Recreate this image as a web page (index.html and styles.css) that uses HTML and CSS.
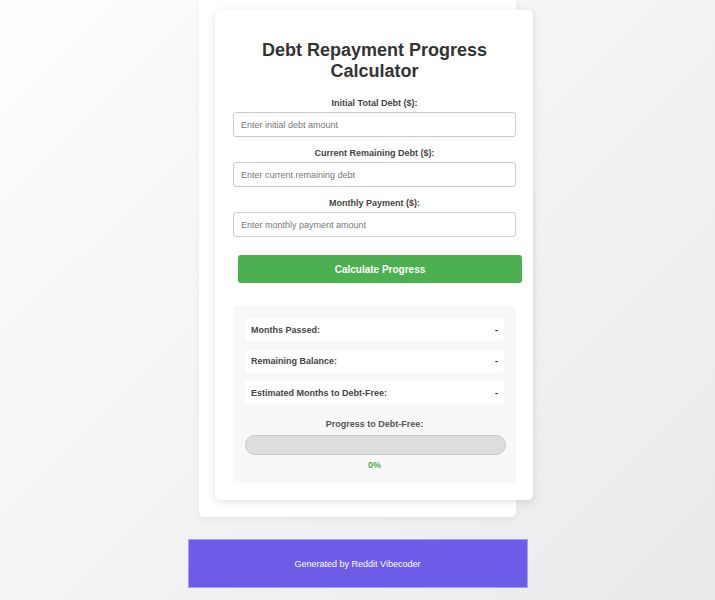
FILE: index.html
```html
<!DOCTYPE html>
<html lang="en">
<head>
<meta charset="utf-8">
<title>Debt Repayment Progress Calculator</title>
<link rel="stylesheet" href="styles.css">
</head>
<body>
<div class="page">
  <div class="shell">
    <div class="card">
      <h1 class="title">Debt Repayment Progress Calculator</h1>
      <div class="field">
        <label class="field-label" for="initial">Initial Total Debt ($):</label>
        <input class="field-input" id="initial" type="number" placeholder="Enter initial debt amount">
      </div>
      <div class="field">
        <label class="field-label" for="remaining">Current Remaining Debt ($):</label>
        <input class="field-input" id="remaining" type="number" placeholder="Enter current remaining debt">
      </div>
      <div class="field">
        <label class="field-label" for="monthly">Monthly Payment ($):</label>
        <input class="field-input" id="monthly" type="number" placeholder="Enter monthly payment amount">
      </div>
      <button class="calc-btn" type="button">Calculate Progress</button>
      <div class="results">
        <div class="result-row"><span class="result-label">Months Passed:</span><span class="result-value">-</span></div>
        <div class="result-row"><span class="result-label">Remaining Balance:</span><span class="result-value">-</span></div>
        <div class="result-row"><span class="result-label">Estimated Months to Debt-Free:</span><span class="result-value">-</span></div>
        <div class="progress-title">Progress to Debt-Free:</div>
        <div class="progress-track"><div class="progress-fill" style="width: 0%"></div></div>
        <div class="progress-pct">0%</div>
      </div>
    </div>
  </div>
  <footer class="footer">Generated by Reddit Vibecoder</footer>
</div>
</body>
</html>
```
FILE: styles.css
```css
* { box-sizing: border-box; }

html, body {
  margin: 0;
  padding: 0;
  height: 100%;
}

body {
  font-family: "Liberation Sans", Arial, sans-serif;
  background: linear-gradient(135deg, #fefefe 0%, #f4f4f5 45%, #e9eaec 100%);
  color: #333;
}

.page {
  display: flex;
  flex-direction: column;
  align-items: center;
  min-height: 600px;
}

.shell {
  width: 317px;
  background: #fff;
  padding: 10px 0 17px 16px;
  border-radius: 0 0 5px 5px;
  box-shadow: 0 2px 6px rgba(0, 0, 0, 0.06);
}

.card {
  width: 318px;
  background: #fff;
  border-radius: 5px;
  padding: 18px 17px 17px 18px;
  box-shadow: 0 2px 8px rgba(0, 0, 0, 0.12);
}

.title {
  font-size: 18px;
  font-weight: bold;
  color: #333;
  text-align: center;
  margin: 12px 0 16px;
  line-height: 21px;
}

.field {
  display: flex;
  flex-direction: column;
  margin-bottom: 11px;
}

.field-label {
  font-size: 9px;
  font-weight: bold;
  color: #444;
  text-align: center;
  margin-bottom: 3px;
  line-height: 11px;
}

.field-input {
  width: 283px;
  height: 25px;
  border: 1px solid #ccc;
  border-radius: 3px;
  padding: 0 7px;
  font-family: "Liberation Sans", Arial, sans-serif;
  font-size: 9px;
  color: #333;
  background: #fff;
}

.field-input::placeholder { color: #777; }

.calc-btn {
  display: block;
  width: 284px;
  height: 28px;
  margin: 18px 0 0 5px;
  border: none;
  border-radius: 3px;
  background: #4caf50;
  color: #fff;
  font-family: "Liberation Sans", Arial, sans-serif;
  font-size: 10px;
  font-weight: bold;
}

.results {
  width: 283px;
  margin-top: 23px;
  background: #f8f8f8;
  border-radius: 3px;
  padding: 12px 12px 12px 12px;
  display: flex;
  flex-direction: column;
}

.result-row {
  display: flex;
  justify-content: space-between;
  align-items: center;
  height: 23px;
  padding: 0 6px;
  background: #fff;
  border-radius: 3px;
  margin-bottom: 8.5px;
  font-size: 9px;
}

.result-label {
  font-weight: bold;
  color: #444;
}

.result-value {
  font-weight: bold;
  color: #222;
}

.progress-title {
  margin-top: 6.5px;
  font-size: 9px;
  font-weight: bold;
  color: #555;
  text-align: center;
  line-height: 11px;
}

.progress-track {
  width: 261px;
  height: 19.5px;
  margin-top: 5px;
  background: #ddd;
  border: 1px solid #c8c8c8;
  border-radius: 10px;
  overflow: hidden;
}

.progress-fill {
  height: 100%;
  background: #4caf50;
}

.progress-pct {
  margin-top: 5.5px;
  font-size: 9px;
  font-weight: bold;
  color: #4caf50;
  text-align: center;
  line-height: 11px;
}

.footer {
  width: 340px;
  height: 49px;
  margin-top: 22px;
  background: #6c5ce7;
  border: 1px solid #a79ef5;
  color: #fff;
  font-size: 9px;
  display: flex;
  align-items: center;
  justify-content: center;
}
```
